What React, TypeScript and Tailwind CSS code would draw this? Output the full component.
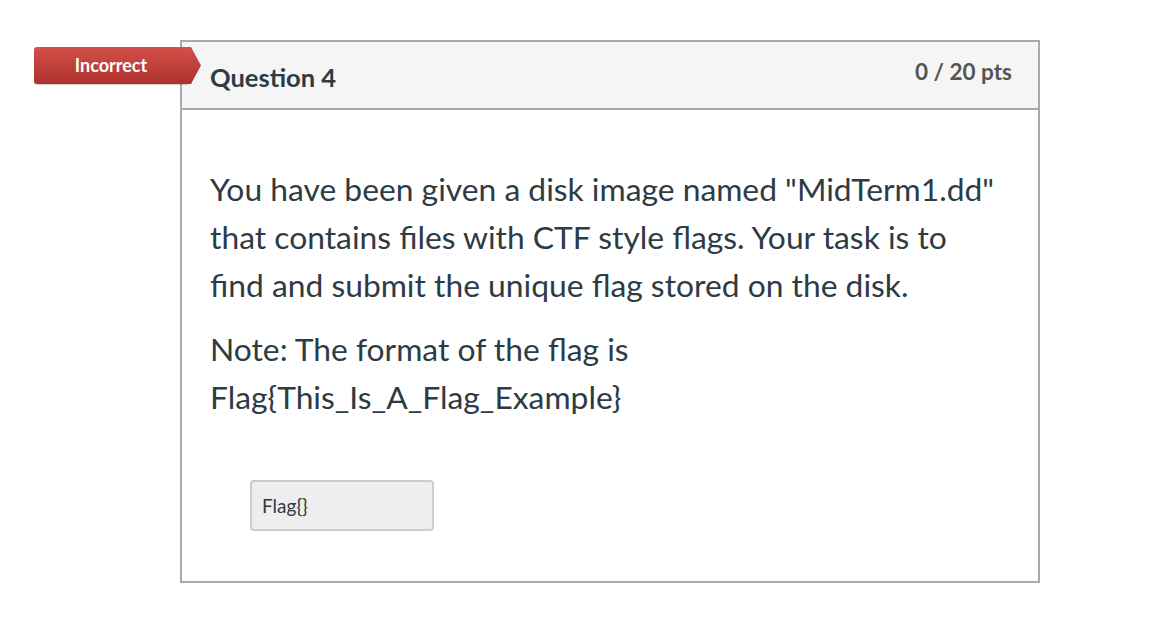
import React from 'react';

const App: React.FC = () => {
  return (
    <div
      className="w-[1150px] h-[630px] bg-white relative"
      style={{ fontFamily: 'Lato, "Open Sans", sans-serif' }}
    >
      <div className="pt-[40px] pl-[180px]">
        <div className="relative w-[860px] h-[543px] border-2 border-[#aaaaaa] flex flex-col">
          {/* header */}
          <div className="h-[68px] bg-[#f5f5f5] border-b-2 border-[#aaaaaa] flex justify-between pl-[28px] pr-[26px]">
            <div className="pt-[20px] text-[25.5px] leading-[30px] font-bold text-[#2d3b45]">Question 4</div>
            <div className="pt-[16px] text-[22.5px] leading-[28px] font-bold text-[#555555]">0 / 20 pts</div>
          </div>

          {/* body */}
          <div className="pl-[28px] pr-[30px] pt-[55px] text-[31.8px] leading-[48px] text-[#2d3b45]">
            <p>
              You have been given a disk image named "MidTerm1.dd" that contains files with CTF style flags. Your
              task is to find and submit the unique flag stored on the disk.
            </p>
            <p className="mt-[16px]">
              Note: The format of the flag is
              <br />
              Flag{'{'}This_Is_A_Flag_Example{'}'}
            </p>
            <div className="mt-[59px] ml-[40px] w-[184px] h-[51px] bg-[#eeeeee] border-2 border-[#cccccc] rounded-[4px] flex items-center pl-[10px] text-[19px] text-[#2d3b45]">
              Flag{'{}'}
            </div>
          </div>

          {/* incorrect badge */}
          <div className="absolute left-[-148px] top-[5px] flex items-center">
            <div className="h-[37px] w-[154px] rounded-l-[3px] bg-gradient-to-b from-[#d4504a] to-[#ad312c] flex items-center justify-center text-white font-bold text-[18px] shadow-[0_1px_1px_rgba(0,0,0,0.2)]">
              Incorrect
            </div>
            <svg width="13" height="37" viewBox="0 0 13 37" className="block">
              <defs>
                <linearGradient id="bg" x1="0" y1="0" x2="0" y2="1">
                  <stop offset="0" stopColor="#d4504a" />
                  <stop offset="1" stopColor="#ad312c" />
                </linearGradient>
              </defs>
              <polygon points="0,0 3,0 13,18.5 3,37 0,37" fill="url(#bg)" />
            </svg>
          </div>
        </div>
      </div>
    </div>
  );
};

export default App;
